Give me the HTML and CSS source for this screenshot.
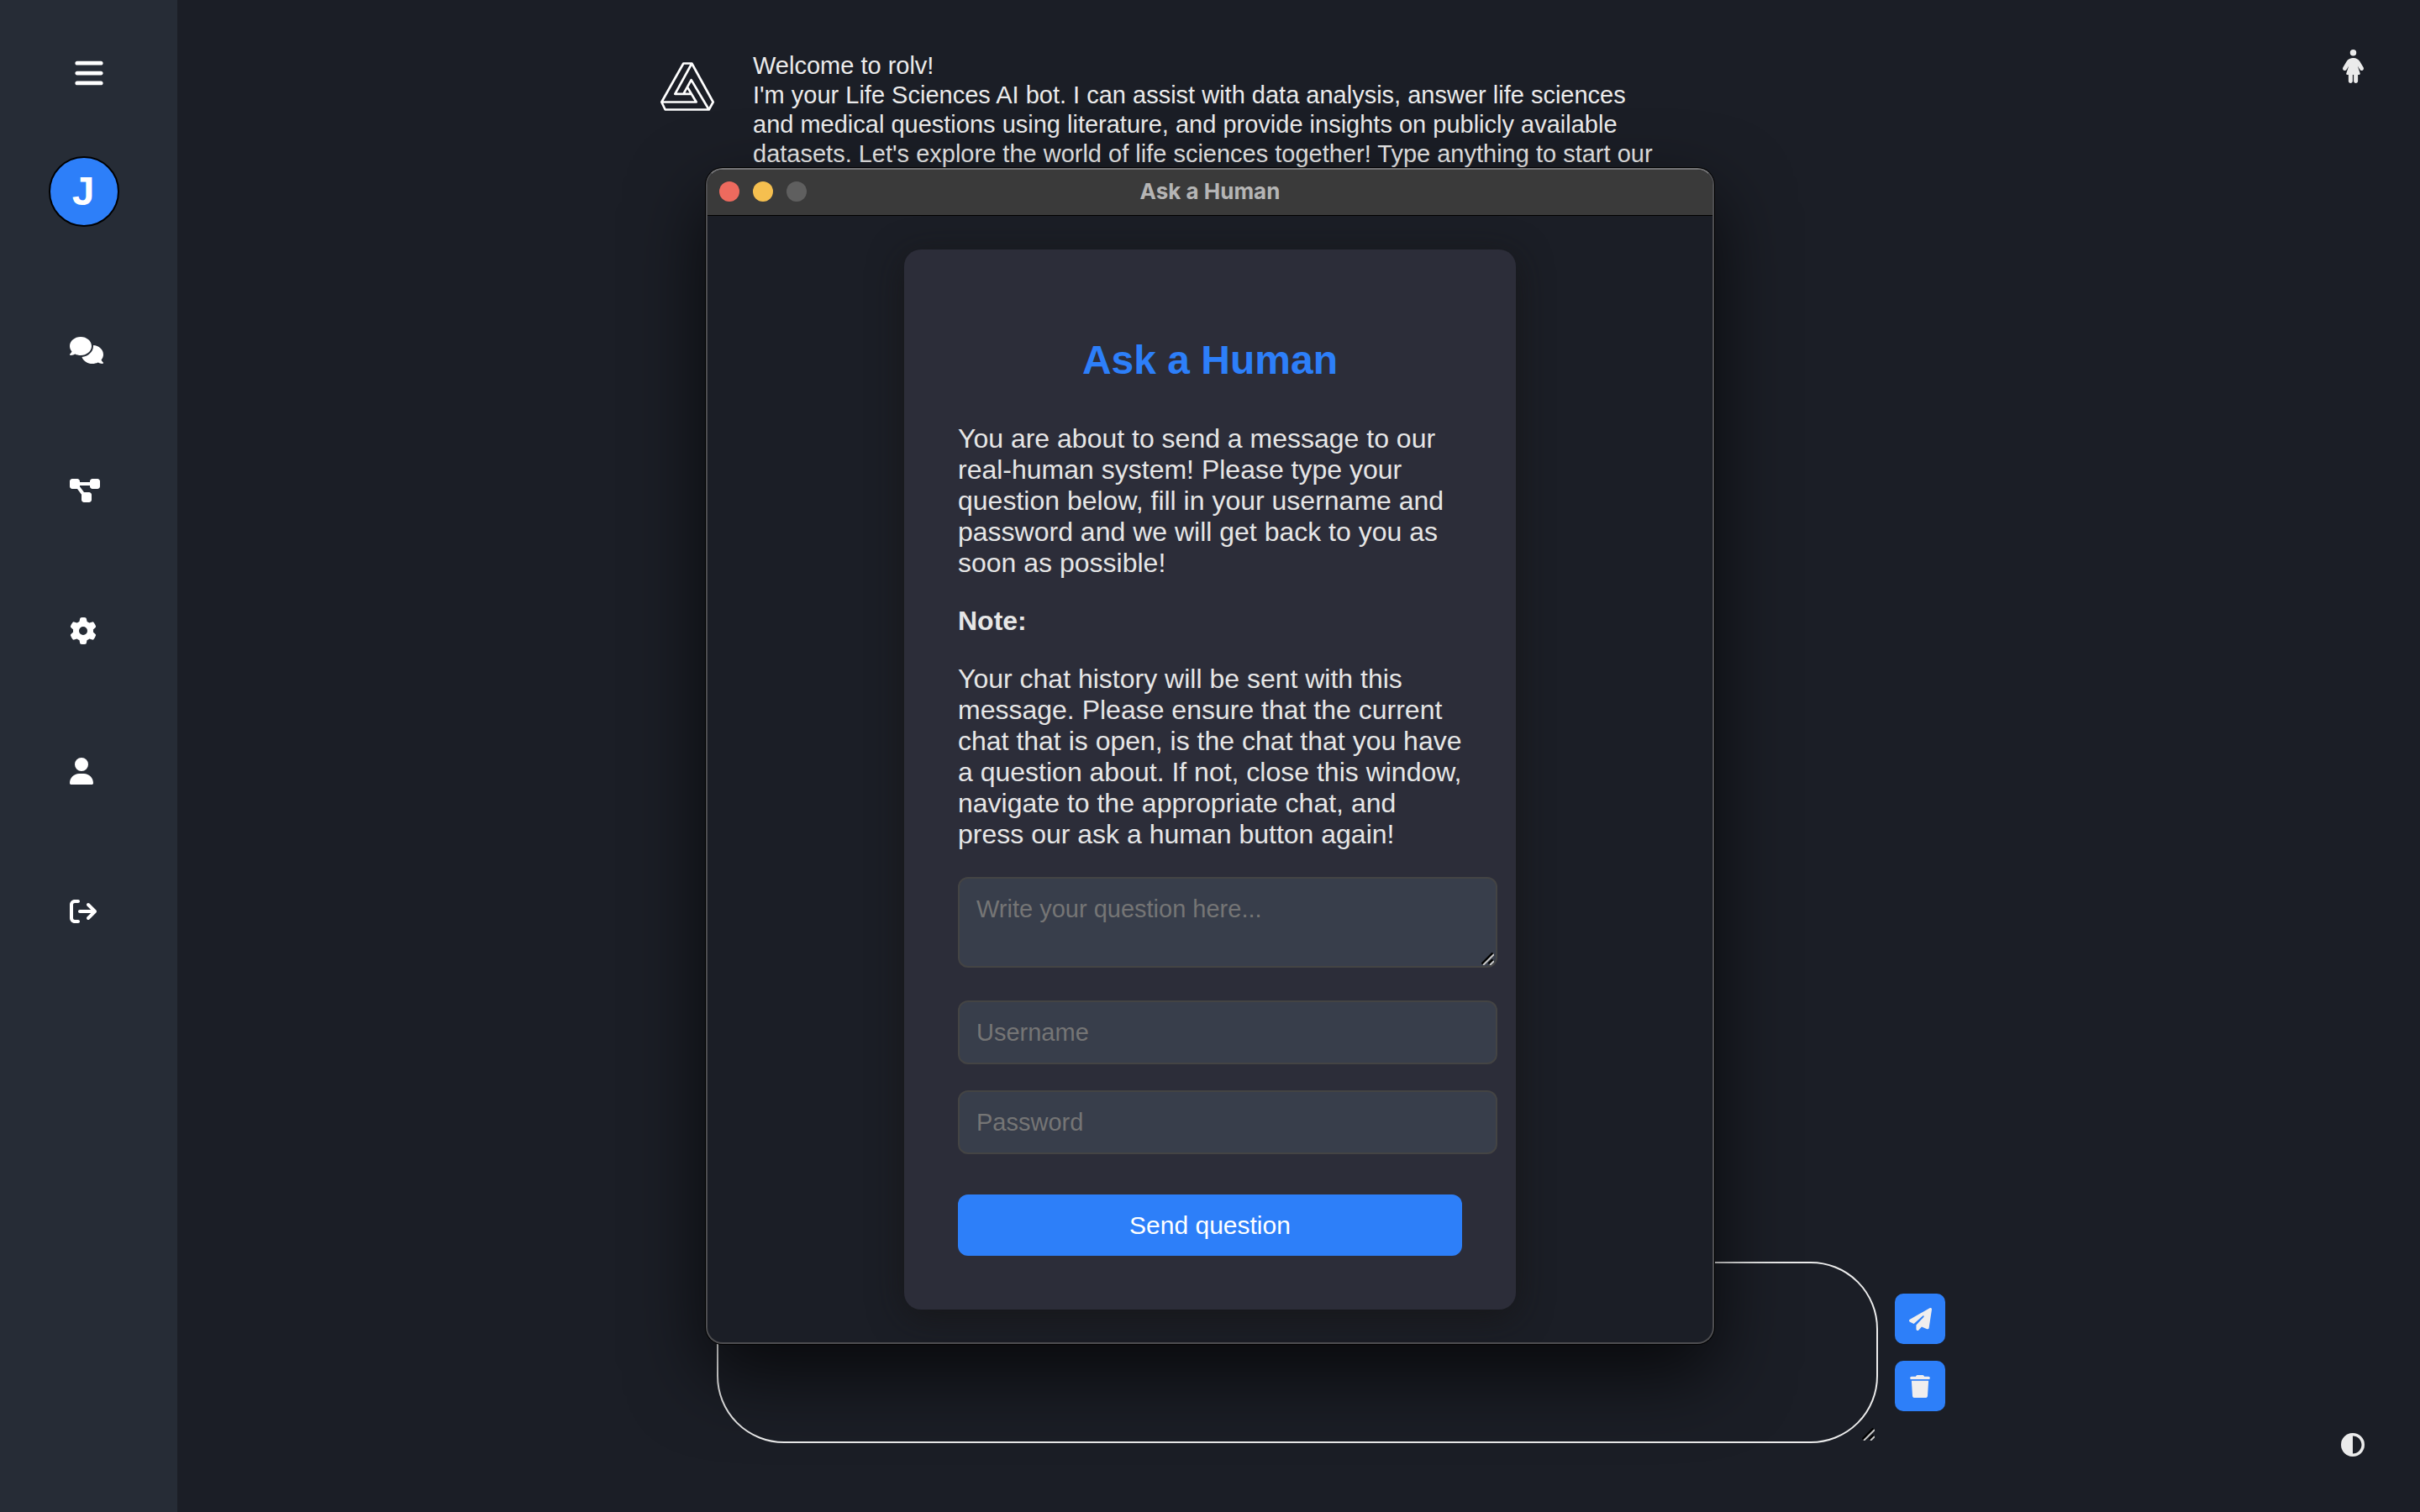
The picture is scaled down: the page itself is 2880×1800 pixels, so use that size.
FILE: index.html
```html
<!DOCTYPE html>
<html lang="en">
<head>
<meta charset="utf-8">
<title>rolv</title>
<link rel="stylesheet" href="styles.css">
</head>
<body>
<svg class="symbols" aria-hidden="true">
  <symbol id="grip" viewBox="0 0 15 15">
    <path d="M1 14 14 1M9 14 14 9" stroke="#000" stroke-width="4"/>
    <path d="M2 15 15 2M10 15 15 10" stroke="#c8c8c8" stroke-width="2"/>
  </symbol>
</svg>
<div class="app">
  <nav class="sidebar" aria-label="Main">
    <button class="icon-button menu" type="button" aria-label="Menu">
      <svg width="34" height="38" viewBox="0 0 448 512" fill="currentColor"><path d="M0 96C0 78.300 14.300 64 32 64H416c17.700 0 32 14.300 32 32s-14.300 32-32 32H32C14.300 128 0 113.700 0 96zM0 256c0-17.700 14.300-32 32-32H416c17.700 0 32 14.300 32 32s-14.300 32-32 32H32c-17.700 0-32-14.300-32-32zM448 416c0 17.700-14.300 32-32 32H32c-17.700 0-32-14.300-32-32s14.300-32 32-32H416c17.700 0 32 14.300 32 32z"/></svg>
    </button>
    <div class="avatar">J</div>
    <div class="links">
      <a href="#chats" aria-label="Chats"><svg width="40" height="32" viewBox="0 0 640 512" fill="currentColor"><path d="M208 352c114.900 0 208-78.800 208-176S322.900 0 208 0S0 78.800 0 176c0 38.600 14.700 74.300 39.600 103.400c-3.500 9.400-8.700 17.700-14.200 24.700c-4.800 6.200-9.700 11-13.300 14.300c-1.800 1.600-3.300 2.900-4.300 3.700c-.5 .4-.9 .7-1.100 .8l-.2 .2C1 327.200-1.400 334.400 .8 340.900S9.100 352 16 352c21.800 0 43.800-5.600 62.100-12.500c9.200-3.500 17.800-7.400 25.200-11.400C134.100 343.300 169.800 352 208 352zM448 176c0 112.300-99.100 196.900-216.500 207C255.800 457.400 336.400 512 432 512c38.200 0 73.900-8.700 104.700-23.900c7.500 4 16 7.900 25.200 11.400c18.300 6.900 40.300 12.500 62.100 12.500c6.900 0 13.100-4.500 15.200-11.100c2.100-6.600-.2-13.800-5.800-17.900l-.2-.2c-.2-.2-.6-.4-1.100-.8c-1-.8-2.500-2-4.300-3.700c-3.600-3.300-8.500-8.100-13.300-14.300c-5.500-7-10.700-15.400-14.200-24.700c24.900-29 39.600-64.700 39.600-103.400c0-92.800-84.900-168.900-192.600-175.500c.4 5.100 .6 10.300 .6 15.500z"/></svg></a>
      <a href="#workflows" aria-label="Workflows"><svg width="36" height="32" viewBox="0 0 576 512" fill="currentColor"><path d="M0 80C0 53.500 21.500 32 48 32h96c26.500 0 48 21.500 48 48V96H384V80c0-26.500 21.500-48 48-48h96c26.500 0 48 21.500 48 48v96c0 26.500-21.500 48-48 48H432c-26.500 0-48-21.500-48-48V160H192v16c0 1.700-.1 3.400-.3 5L272 288h96c26.500 0 48 21.500 48 48v96c0 26.500-21.500 48-48 48H272c-26.500 0-48-21.500-48-48V336c0-1.700 .1-3.400 .3-5L144 224H48c-26.500 0-48-21.500-48-48V80z"/></svg></a>
      <a href="#settings" aria-label="Settings"><svg width="32" height="32" viewBox="0 0 512 512" fill="currentColor"><path d="M495.900 166.600c3.200 8.700 .5 18.400-6.400 24.600l-43.300 39.400c1.100 8.300 1.700 16.800 1.700 25.400s-.6 17.100-1.700 25.400l43.300 39.400c6.900 6.200 9.600 15.900 6.400 24.600c-4.400 11.900-9.700 23.300-15.800 34.300l-4.700 8.100c-6.600 11-14 21.400-22.100 31.200c-5.900 7.200-15.700 9.600-24.500 6.800l-55.700-17.700c-13.400 10.300-28.200 18.900-44 25.400l-12.500 57.100c-2 9.100-9 16.300-18.200 17.800c-13.800 2.300-28 3.500-42.500 3.500s-28.700-1.200-42.500-3.500c-9.200-1.500-16.200-8.700-18.200-17.800l-12.500-57.100c-15.800-6.500-30.600-15.100-44-25.400L83.100 425.900c-8.800 2.800-18.600 .3-24.500-6.800c-8.100-9.800-15.500-20.200-22.100-31.200l-4.700-8.100c-6.100-11-11.400-22.400-15.800-34.300c-3.200-8.700-.5-18.400 6.400-24.600l43.300-39.400C64.600 273.100 64 264.600 64 256s.6-17.100 1.700-25.400L22.400 191.200c-6.900-6.200-9.600-15.900-6.400-24.600c4.400-11.900 9.700-23.300 15.800-34.300l4.700-8.100c6.600-11 14-21.400 22.100-31.200c5.900-7.200 15.700-9.600 24.500-6.800l55.700 17.700c13.400-10.300 28.200-18.900 44-25.400l12.500-57.100c2-9.100 9-16.300 18.200-17.800C227.300 1.200 241.500 0 256 0s28.700 1.200 42.500 3.500c9.200 1.500 16.200 8.700 18.200 17.800l12.500 57.100c15.800 6.500 30.600 15.100 44 25.400l55.700-17.700c8.800-2.800 18.600-.3 24.500 6.800c8.100 9.800 15.500 20.200 22.100 31.200l4.700 8.100c6.100 11 11.400 22.400 15.800 34.300zM256 336a80 80 0 1 0 0-160 80 80 0 1 0 0 160z"/></svg></a>
      <a href="#profile" aria-label="Profile"><svg width="28" height="32" viewBox="0 0 448 512" fill="currentColor"><path d="M224 256A128 128 0 1 0 224 0a128 128 0 1 0 0 256zm-45.700 48C79.800 304 0 383.800 0 482.300C0 498.700 13.300 512 29.700 512H418.300c16.400 0 29.700-13.300 29.700-29.700C448 383.800 368.200 304 269.700 304H178.300z"/></svg></a>
      <a href="#logout" aria-label="Log out"><svg width="32" height="32" viewBox="0 0 512 512" fill="currentColor"><path d="M502.600 278.600c12.500-12.500 12.500-32.800 0-45.300l-128-128c-12.500-12.500-32.800-12.500-45.300 0s-12.500 32.800 0 45.300L402.700 224 192 224c-17.700 0-32 14.300-32 32s14.300 32 32 32l210.700 0-73.400 73.400c-12.500 12.500-12.500 32.800 0 45.300s32.800 12.500 45.300 0l128-128zM160 96c17.700 0 32-14.300 32-32s-14.300-32-32-32L96 32C43 32 0 75 0 128L0 384c0 53 43 96 96 96l64 0c17.700 0 32-14.300 32-32s-14.300-32-32-32l-64 0c-17.700 0-32-14.300-32-32l0-256c0-17.700 14.300-32 32-32l64 0z"/></svg></a>
    </div>
  </nav>

  <main class="main">
    <article class="message">
      <svg class="logo" width="64" height="58" viewBox="24 24 192 173" fill="none" stroke="#fff" stroke-width="8" stroke-linejoin="round"><path d="M106 28H136L212 166 197 193H41L28 166ZM136 28 76 137H134M28 166H152L119 111M197 193 134 87 106 137"/></svg>
      <p class="message-text">Welcome to rolv!<br>I'm your Life Sciences AI bot. I can assist with data analysis, answer life sciences and medical questions using literature, and provide insights on publicly available datasets. Let's explore the world of life sciences together! Type anything to start our</p>
    </article>
    <button class="icon-button human" type="button" aria-label="Ask a human">
      <svg width="25" height="40" viewBox="0 0 320 512" fill="currentColor"><path d="M160 0a48 48 0 1 1 0 96 48 48 0 1 1 0-96zM88 384H70.200c-10.900 0-18.600-10.700-15.200-21.100L93.300 248.100 59.400 304.500c-9.100 15.100-28.800 20-43.900 10.900s-20-28.800-10.900-43.900l53.600-89.200c20.300-33.700 56.700-54.300 96-54.300h11.600c39.300 0 75.700 20.600 96 54.300l53.600 89.200c9.100 15.100 4.200 34.800-10.900 43.900s-34.800 4.200-43.900-10.900l-33.900-56.300L265 362.900c3.500 10.400-4.300 21.100-15.200 21.100H232v96c0 17.700-14.300 32-32 32s-32-14.300-32-32V384H152v96c0 17.700-14.300 32-32 32s-32-14.300-32-32V384z"/></svg>
    </button>
    <div class="composer resizable">
      <textarea class="composer-input" aria-label="Message"></textarea>
      <svg class="grip" aria-hidden="true"><use href="#grip"/></svg>
    </div>
    <div class="actions">
      <div class="action-stack">
        <button class="action" type="button" aria-label="Send"><svg width="27" height="27" viewBox="0 0 512 512" fill="currentColor"><path d="M498.100 5.600c10.100 7 15.400 19.100 13.500 31.200l-64 416c-1.500 9.700-7.400 18.200-16 23s-18.900 5.400-28 1.600L284 427.700l-68.500 74.100c-8.900 9.700-22.900 12.900-35.200 8.100S160 493.200 160 480V396.400c0-4 1.500-7.800 4.200-10.700L331.800 202.800c5.800-6.300 5.600-16-.4-22s-15.700-6.400-22-.7L106 360.800 17.700 316.600C7.100 311.300 .3 300.700 0 288.900s5.900-22.800 16.100-28.700l448-256c10.700-6.100 23.900-5.500 34 1.400z"/></svg></button>
        <button class="action" type="button" aria-label="Clear chat"><svg width="24" height="27" viewBox="0 0 448 512" fill="currentColor"><path d="M135.200 17.700C140.600 6.800 151.700 0 163.800 0H284.200c12.100 0 23.200 6.800 28.600 17.700L320 32h96c17.700 0 32 14.300 32 32s-14.300 32-32 32H32C14.300 96 0 81.700 0 64S14.300 32 32 32h96l7.200-14.300zM32 128H416L394.800 467c-1.600 25.300-22.600 45-47.900 45H101.100c-25.300 0-46.300-19.700-47.900-45L32 128z"/></svg></button>
      </div>
      <button class="icon-button theme" type="button" aria-label="Toggle theme"><svg width="28" height="28" viewBox="0 0 512 512" fill="currentColor"><path d="M448 256c0-106-86-192-192-192V448c106 0 192-86 192-192zM0 256a256 256 0 1 1 512 0A256 256 0 1 1 0 256z"/></svg></button>
    </div>
  </main>
</div>

<div class="overlay">
  <section class="window" role="dialog" aria-label="Ask a Human">
    <header class="titlebar">
      <div class="lights">
        <button class="light close" type="button" aria-label="Close"></button>
        <button class="light minimise" type="button" aria-label="Minimise"></button>
        <button class="light zoom" type="button" aria-label="Zoom" disabled></button>
      </div>
      <div class="title">Ask a Human</div>
    </header>
    <div class="window-body">
      <form class="card">
        <h1 class="heading">Ask a Human</h1>
        <p class="copy">You are about to send a message to our real-human system! Please type your question below, fill in your username and password and we will get back to you as soon as possible!</p>
        <p class="copy"><strong>Note:</strong></p>
        <p class="copy">Your chat history will be sent with this message. Please ensure that the current chat that is open, is the chat that you have a question about. If not, close this window, navigate to the appropriate chat, and press our ask a human button again!</p>
        <div class="question resizable">
          <textarea class="field" aria-label="Question" placeholder="Write your question here..."></textarea>
          <svg class="grip" aria-hidden="true"><use href="#grip"/></svg>
        </div>
        <input class="field" type="text" aria-label="Username" placeholder="Username">
        <input class="field" type="password" aria-label="Password" placeholder="Password">
        <button class="submit" type="submit">Send question</button>
      </form>
    </div>
  </section>
</div>
</body>
</html>
```
FILE: styles.css
```css
* {
  box-sizing: border-box;
}

body {
  margin: 0;
  background: #1b1e26;
  color: #ebebeb;
  font-family: "Liberation Sans", Arial, sans-serif;
}

button,
input,
textarea {
  font-family: inherit;
}

svg {
  display: block;
}

.symbols {
  position: absolute;
  width: 0;
  height: 0;
}

.app {
  display: flex;
  min-height: 100vh;
}

/* Sidebar */

.sidebar {
  width: 211px;
  flex: none;
  background: #262c36;
  color: #fff;
}

.icon-button {
  display: block;
  padding: 0;
  border: 0;
  background: none;
  color: inherit;
}

.menu {
  margin: 68px auto 0;
}

.avatar {
  width: 84px;
  height: 84px;
  margin: 80px 0 0 58px;
  padding-right: 2px;
  border: 2px solid #000;
  border-radius: 50%;
  background: #2d7ff9;
  font-size: 48px;
  font-weight: bold;
  line-height: 80px;
  text-align: center;
}

.links {
  display: flex;
  flex-direction: column;
  align-items: flex-start;
  gap: 135px;
  padding: 131px 0 0 83px;
}

.links a {
  color: inherit;
}

/* Chat */

.main {
  flex: 1;
  display: grid;
  grid-template-columns: 1fr 48vw 1fr;
  grid-template-rows: 1fr auto;
  padding-right: 3px;
}

.message {
  grid-area: 1 / 1 / 2 / 4;
  justify-self: center;
  display: flex;
  gap: 46px;
  width: 1516px;
  max-width: 100%;
}

.logo {
  flex: none;
  margin-top: 74px;
}

.message-text {
  width: 1088px;
  margin: 61px 0 0;
  font-size: 29px;
  line-height: 35px;
}

.human {
  grid-area: 1 / 3;
  justify-self: end;
  align-self: start;
  margin: 59px 64px 0 0;
}

.composer {
  grid-area: 2 / 2;
  margin-bottom: 82px;
}

.resizable {
  position: relative;
}

.composer-input {
  display: block;
  width: 100%;
  height: 216px;
  padding: 40px;
  border: 2px solid #ebebeb;
  border-radius: 80px;
  background: transparent;
  color: inherit;
  font-size: 29px;
  resize: none;
}

.grip {
  position: absolute;
  right: 4px;
  bottom: 3px;
  width: 15px;
  height: 15px;
}

.actions {
  grid-area: 2 / 3;
  display: flex;
  justify-content: space-between;
  align-items: flex-end;
  padding: 0 63px 66px 20px;
}

.action-stack {
  display: flex;
  flex-direction: column;
  gap: 20px;
  align-self: flex-start;
  padding-top: 38px;
}

.action {
  display: grid;
  place-items: center;
  width: 60px;
  height: 60px;
  padding: 0;
  border: 0;
  border-radius: 10px;
  background: #2d7ff9;
  color: #f0eeee;
}

/* Window */

.overlay {
  position: absolute;
  inset: 0;
  display: flex;
  align-items: center;
  justify-content: center;
}

.window {
  width: 1200px;
  max-width: 100%;
  overflow: hidden;
  border: 2px solid #4d4d50;
  border-top-color: #757577;
  border-radius: 20px;
  background: #1b1e26;
  box-shadow: 0 0 0 1px #000, 0 36px 90px rgba(0, 0, 0, 0.7);
}

.titlebar {
  display: grid;
  grid-template-columns: 1fr auto 1fr;
  align-items: center;
  height: 55px;
  padding: 0 14px 2px;
  border-bottom: 1px solid #000;
  background: #3a3a3a;
}

.lights {
  display: flex;
  gap: 16px;
}

.light {
  width: 24px;
  height: 24px;
  padding: 0;
  border: 0;
  border-radius: 50%;
}

.close {
  background: #ed6a5e;
}

.minimise {
  background: #f5bf4f;
}

.zoom {
  background: #5f5f5f;
}

.title {
  color: #b5b5b5;
  font-family: Inter, "Liberation Sans", sans-serif;
  font-size: 26px;
  font-weight: bold;
  line-height: 32px;
}

.window-body {
  display: flex;
  justify-content: center;
  padding: 40px 0 39px;
}

.card {
  width: 728px;
  padding: 64px;
  border-radius: 20px;
  background: #2c2d39;
  box-shadow: 0 8px 40px rgba(20, 18, 16, 0.6);
}

.heading {
  margin: 40px 0 48px;
  color: #2d7ff9;
  font-size: 48px;
  font-weight: bold;
  line-height: 55px;
  text-align: center;
}

.copy {
  margin: 0 0 32px;
  font-size: 32px;
  line-height: 37px;
  color: #e6e6e6;
}

.field {
  display: block;
  width: 642px;
  height: 76px;
  margin: 0 0 31px;
  padding: 20px;
  border: 2px solid #444;
  border-radius: 12px;
  background: #383e4b;
  color: #e6e6e6;
  font-size: 29px;
  line-height: 33px;
}

.field::placeholder {
  color: #757575;
  opacity: 1;
}

.question {
  width: 642px;
  margin-bottom: 39px;
}

.question .field {
  height: 108px;
  margin: 0;
  resize: none;
}

.submit {
  display: block;
  width: 100%;
  height: 73px;
  margin-top: 48px;
  padding: 0;
  border: 0;
  border-radius: 12px;
  background: #2d7ff9;
  color: #fff;
  font-size: 30px;
}
```
